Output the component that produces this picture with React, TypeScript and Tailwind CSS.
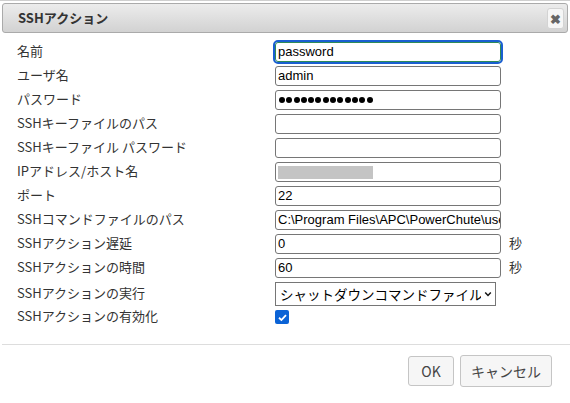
import React from "react";

type Field = {
  label: string;
  value?: string;
  kind?: "text" | "password" | "redacted";
  unit?: string;
  focused?: boolean;
};

const fields: Field[] = [
  { label: "名前", value: "password", focused: true },
  { label: "ユーザ名", value: "admin" },
  { label: "パスワード", value: "0123456789abc", kind: "password" },
  { label: "SSHキーファイルのパス", value: "" },
  { label: "SSHキーファイル パスワード", value: "" },
  { label: "IPアドレス/ホスト名", kind: "redacted" },
  { label: "ポート", value: "22" },
  { label: "SSHコマンドファイルのパス", value: "C:\\Program Files\\APC\\PowerChute\\user_files\\shutdown.cmd" },
  { label: "SSHアクション遅延", value: "0", unit: "秒" },
  { label: "SSHアクションの時間", value: "60", unit: "秒" },
];

const jp = "font-['Noto_Sans_CJK_JP','Noto_Sans',sans-serif]";
const latin = "font-['Liberation_Sans','Noto_Sans_CJK_JP',sans-serif]";

function TextBox({ field }: { field: Field }) {
  const base =
    "flex h-5 w-[226px] items-center overflow-hidden whitespace-nowrap rounded-[3px] bg-white px-[2px] text-[13px] text-black";
  const border = field.focused
    ? "border border-[#2e8b57] outline-2 outline-[#1a5fd1]"
    : "border border-[#767676]";

  return (
    <div className={`${base} ${border} ${latin}`}>
      {field.kind === "redacted" ? (
        <span className="block h-[13px] w-[95px] bg-[#c4c4c4]" />
      ) : field.kind === "password" ? (
        <span className="flex gap-[1.3px] pl-[1px]">
          {(field.value ?? "").split("").map((_, i) => (
            <span key={i} className="block h-[6px] w-[6px] rounded-full bg-black" />
          ))}
        </span>
      ) : (
        <span>{field.value}</span>
      )}
    </div>
  );
}

export default function App() {
  return (
    <div className={`h-[403px] w-[570px] overflow-hidden border-t border-[#cfcfcf] bg-white ${jp}`}>
      {/* title bar */}
      <div className="mx-[2px] mt-[2px] flex h-[30px] items-center justify-between rounded-[3px] border border-[#aaaaaa] bg-gradient-to-b from-[#ececec] to-[#d2d2d2] pl-[15px] pr-[3px]">
        <span className="text-[13px] font-bold text-[#333333]">SSHアクション</span>
        <button
          type="button"
          className="flex h-[21px] w-[17px] items-center justify-center rounded-[3px] border border-[#d3d3d3] bg-[#f6f6f6] text-[13px] font-bold leading-none text-[#666666]"
        >
          ✖
        </button>
      </div>

      {/* form */}
      <div className="flex flex-col gap-y-1 pl-[17px] pt-[9px]">
        {fields.map((f) => (
          <div key={f.label} className="flex h-5 items-center">
            <span className="w-[258px] -translate-y-[1.5px] text-[13px] text-[#333333]">{f.label}</span>
            <TextBox field={f} />
            {f.unit ? (
              <span className="ml-[8px] -translate-y-[1px] text-[13px] text-[#333333]">{f.unit}</span>
            ) : null}
          </div>
        ))}

        <div className="flex h-6 items-center">
          <span className="w-[258px] -translate-y-[1.5px] text-[13px] text-[#333333]">SSHアクションの実行</span>
          <div className="flex h-6 w-[221px] items-center gap-[3px] border border-[#767676] bg-white pl-[4px] pr-[3px]">
            <span className="w-[201px] shrink-0 overflow-hidden whitespace-nowrap text-[13.5px] text-black">
              シャットダウンコマンドファイル
            </span>
            <svg width="8" height="8" viewBox="0 0 10 10" className="shrink-0">
              <path d="M1.5 3 L5 6.8 L8.5 3" fill="none" stroke="#111" strokeWidth="1.8" />
            </svg>
          </div>
        </div>

        <div className="flex h-[14px] items-center">
          <span className="w-[258px] -translate-y-[1px] text-[13px] text-[#333333]">SSHアクションの有効化</span>
          <span className="flex h-[14px] w-[14px] items-center justify-center rounded-[2px] bg-[#0b63d6]">
            <svg width="11" height="11" viewBox="0 0 12 12">
              <path d="M2.2 6.3 L4.8 8.8 L9.8 3.4" fill="none" stroke="#fff" strokeWidth="2" />
            </svg>
          </span>
        </div>
      </div>

      {/* footer */}
      <div className="ml-[2px] mt-[20px] border-t border-[#dddddd]" />
      <div className="flex justify-end gap-[6px] pr-[18px] pt-[11px]">
        <button
          type="button"
          className="h-[30px] w-[46px] rounded-[3px] border border-[#c5c5c5] bg-[#f6f6f6] text-[14px] text-[#454545]"
        >
          OK
        </button>
        <button
          type="button"
          className="h-[32px] w-[92px] -translate-y-[1px] rounded-[3px] border border-[#c5c5c5] bg-[#f6f6f6] text-[14px] text-[#454545]"
        >
          キャンセル
        </button>
      </div>
    </div>
  );
}
